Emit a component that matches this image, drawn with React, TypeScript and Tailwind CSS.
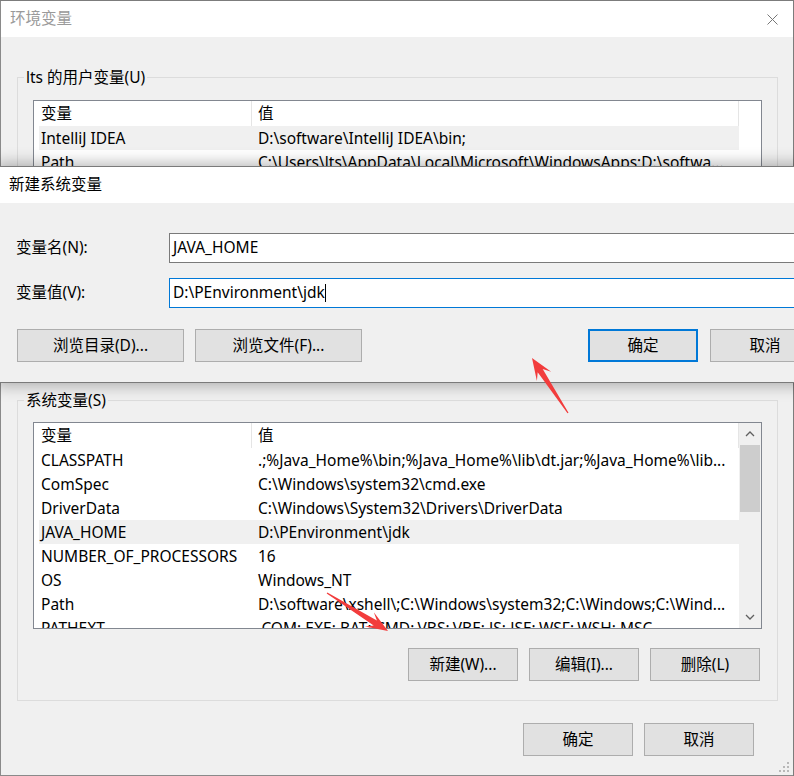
import type { ReactNode } from "react";

type Row = [string, string];

const USER_VARS: Row[] = [
  ["IntelliJ IDEA", "D:\\software\\IntelliJ IDEA\\bin;"],
  ["Path", "C:\\Users\\lts\\AppData\\Local\\Microsoft\\WindowsApps;D:\\softwa..."],
];

const SYSTEM_VARS: Row[] = [
  ["CLASSPATH", ".;%Java_Home%\\bin;%Java_Home%\\lib\\dt.jar;%Java_Home%\\lib..."],
  ["ComSpec", "C:\\Windows\\system32\\cmd.exe"],
  ["DriverData", "C:\\Windows\\System32\\Drivers\\DriverData"],
  ["JAVA_HOME", "D:\\PEnvironment\\jdk"],
  ["NUMBER_OF_PROCESSORS", "16"],
  ["OS", "Windows_NT"],
  ["Path", "D:\\software\\xshell\\;C:\\Windows\\system32;C:\\Windows;C:\\Wind..."],
  ["PATHEXT", ".COM;.EXE;.BAT;.CMD;.VBS;.VBE;.JS;.JSE;.WSF;.WSH;.MSC"],
];

function Btn({
  children,
  className = "",
  primary,
}: {
  children: ReactNode;
  className?: string;
  primary?: boolean;
}) {
  return (
    <button
      type="button"
      className={`h-[33px] shrink-0 bg-[#e1e1e1] text-black leading-none ${
        primary ? "border-2 border-[#0078d7]" : "border border-[#adadad]"
      } ${className}`}
    >
      {children}
    </button>
  );
}

function Chevron({ up }: { up?: boolean }) {
  return (
    <svg width="10" height="6" viewBox="0 0 10 6">
      <polyline
        points={up ? "1,5 5,1 9,5" : "1,1 5,5 9,1"}
        fill="none"
        stroke="#606060"
        strokeWidth="1.3"
      />
    </svg>
  );
}

function VarList({
  rows,
  selected,
  scroll,
}: {
  rows: Row[];
  selected: number;
  scroll?: boolean;
}) {
  return (
    <div className="h-[207px] w-[729px] border border-[#828790] bg-white flex overflow-hidden">
      <div className="flex-1 min-w-0 pl-[5px] flex flex-col">
        <div className="flex h-[25px] shrink-0 leading-[24px]">
          <div className="w-[213px] pl-[2px] border-r border-[#e5e5e5]">变量</div>
          <div className="flex-1 pl-[6px] border-r border-[#e5e5e5]">值</div>
        </div>
        {rows.map(([name, value], i) => (
          <div
            key={name + i}
            className={`flex h-[24px] shrink-0 leading-[24px] whitespace-nowrap ${
              i === selected ? "bg-[#f0f0f0]" : ""
            }`}
          >
            <div className="w-[213px] pl-[2px] overflow-hidden">{name}</div>
            <div className="flex-1 pl-[6px] overflow-hidden">{value}</div>
          </div>
        ))}
      </div>
      {scroll ? (
        <div className="w-[22px] shrink-0 bg-[#f0f0f0] flex flex-col">
          <div className="h-[22px] flex items-center justify-center">
            <Chevron up />
          </div>
          <div className="h-[67px] mx-[1px] bg-[#cdcdcd]" />
          <div className="flex-1" />
          <div className="h-[22px] flex items-center justify-center">
            <Chevron />
          </div>
        </div>
      ) : (
        <div className="w-[22px] shrink-0" />
      )}
    </div>
  );
}

function arrowPoints(x1: number, y1: number, x2: number, y2: number) {
  const dx = x2 - x1;
  const dy = y2 - y1;
  const len = Math.hypot(dx, dy);
  const ux = dx / len;
  const uy = dy / len;
  const px = -uy;
  const py = ux;
  const headLen = 22;
  const neck = 15;
  const headW = 8.5;
  const neckW = 3;
  const tailW = 0.6;
  const nx = x2 - ux * neck;
  const ny = y2 - uy * neck;
  const bx = x2 - ux * headLen;
  const by = y2 - uy * headLen;
  const pts = [
    [x1 + px * tailW, y1 + py * tailW],
    [nx + px * neckW, ny + py * neckW],
    [bx + px * headW, by + py * headW],
    [x2, y2],
    [bx - px * headW, by - py * headW],
    [nx - px * neckW, ny - py * neckW],
    [x1 - px * tailW, y1 - py * tailW],
  ];
  return pts.map((p) => p.map((v) => v.toFixed(1)).join(",")).join(" ");
}

export default function App() {
  return (
    <div className="relative w-[794px] h-[776px] overflow-hidden bg-[#7c7c7c] text-[15.5px] text-black font-['Noto_Sans','Noto_Sans_CJK_SC',sans-serif]">
      {/* 环境变量 window */}
      <div className="mt-px w-[793px] h-[775px] bg-[#f0f0f0] border-l border-b border-[#8a8a8a] flex flex-col">
        <div className="h-[36px] shrink-0 bg-white flex items-center justify-between pl-[9px] pr-[15px]">
          <span className="text-[#9a9a9a]">环境变量</span>
          <svg width="11" height="11" viewBox="0 0 11 11">
            <path d="M0.5 0.5L10.5 10.5M10.5 0.5L0.5 10.5" stroke="#777" strokeWidth="1" />
          </svg>
        </div>

        <div className="flex-1 pl-[16px] pt-[30px]">
          <fieldset className="w-[761px] h-[313px] border border-[#dcdcdc]">
            <legend className="ml-[6px] px-[2px] leading-[20px]">lts 的用户变量(U)</legend>
            <div className="pl-[15px] pt-[13px]">
              <VarList rows={USER_VARS} selected={0} />
            </div>
          </fieldset>

          <fieldset className="mt-[10px] w-[761px] border border-[#dcdcdc]">
            <legend className="ml-[6px] px-[2px] leading-[20px]">系统变量(S)</legend>
            <div className="pl-[15px] pt-[12px] pb-[19px]">
              <VarList rows={SYSTEM_VARS} selected={3} scroll />
              <div className="mt-[19px] w-[729px] pr-[2px] flex justify-end gap-[11px]">
                <Btn className="w-[110px]">新建(W)...</Btn>
                <Btn className="w-[110px]">编辑(I)...</Btn>
                <Btn className="w-[110px]">删除(L)</Btn>
              </div>
            </div>
          </fieldset>

          <div className="mt-[22px] w-[761px] pr-[24px] flex justify-end gap-[11px]">
            <Btn className="w-[110px]">确定</Btn>
            <Btn className="w-[110px]">取消</Btn>
          </div>
        </div>
      </div>

      {/* resize grip */}
      <svg className="absolute right-[4px] bottom-[3px]" width="12" height="12" viewBox="0 0 12 12">
        {[
          [10, 2],
          [10, 6],
          [6, 6],
          [10, 10],
          [6, 10],
          [2, 10],
        ].map(([cx, cy]) => (
          <rect key={`${cx}-${cy}`} x={cx - 1} y={cy - 1} width="2" height="2" fill="#b8b8b8" />
        ))}
      </svg>

      {/* 新建系统变量 dialog */}
      <div className="absolute left-[-1px] top-[166px] w-[840px] border border-[#7a7a7a] bg-[#f0f0f0] shadow-[0_0_14px_3px_rgba(0,0,0,0.28)]">
        <div className="h-[36px] bg-white flex items-center pl-[9px]">新建系统变量</div>
        <div className="pl-[16px] pr-[18px] pt-[30px] pb-[20px]">
          <div className="flex items-center h-[30px]">
            <div className="w-[153px] shrink-0">变量名(N):</div>
            <div className="flex-1 h-[30px] border border-[#7a7a7a] bg-white pl-[3px] flex items-center">
              JAVA_HOME
            </div>
          </div>
          <div className="mt-[15px] flex items-center h-[30px]">
            <div className="w-[153px] shrink-0">变量值(V):</div>
            <div className="flex-1 h-[30px] border border-[#0078d7] bg-white pl-[3px] flex items-center">
              <span>D:\PEnvironment\jdk</span>
              <span className="w-px h-[18px] bg-black" />
            </div>
          </div>
          <div className="mt-[21px] pl-[1px] flex items-center">
            <Btn className="w-[167px]">浏览目录(D)...</Btn>
            <Btn className="ml-[11px] w-[167px]">浏览文件(F)...</Btn>
            <Btn primary className="ml-auto w-[110px]">确定</Btn>
            <Btn className="ml-[12px] w-[110px]">取消</Btn>
          </div>
        </div>
      </div>

      {/* annotation arrows */}
      <svg className="absolute inset-0 pointer-events-none" width="794" height="776">
        <polygon points={arrowPoints(568, 413, 532, 358)} fill="#f23c3c" />
        <polygon points={arrowPoints(327, 593, 388, 631)} fill="#f23c3c" />
      </svg>
    </div>
  );
}
